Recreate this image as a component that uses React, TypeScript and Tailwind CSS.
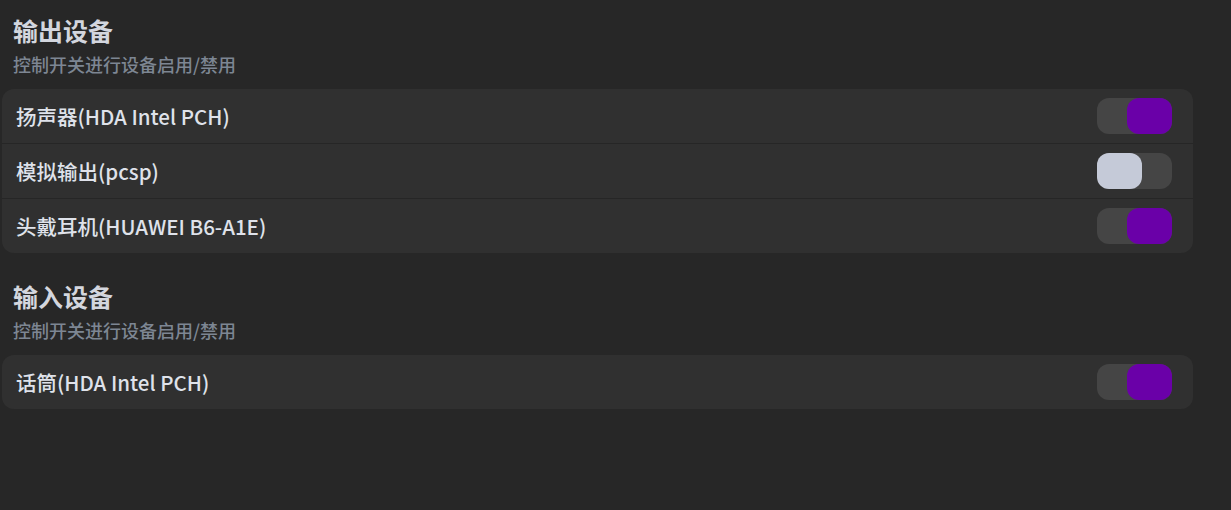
const font = { fontFamily: '"Noto Sans CJK SC", "Noto Sans", sans-serif' };

type Device = { name: string; on: boolean };

const outputs: Device[] = [
  { name: "扬声器(HDA Intel PCH)", on: true },
  { name: "模拟输出(pcsp)", on: false },
  { name: "头戴耳机(HUAWEI B6-A1E)", on: true },
];

const inputs: Device[] = [{ name: "话筒(HDA Intel PCH)", on: true }];

function Toggle({ on }: { on: boolean }) {
  return (
    <div
      className={`flex w-[75px] h-[36px] rounded-[12px] bg-[#454545] ${
        on ? "justify-end" : "justify-start"
      }`}
    >
      <div
        className={`w-[45px] h-[36px] rounded-[12px] ${
          on ? "bg-[#6a00a8]" : "bg-[#c5cad8]"
        }`}
      />
    </div>
  );
}

function Section({ title, devices }: { title: string; devices: Device[] }) {
  return (
    <div className="pt-[13px] pb-[13px]">
      <div className="pl-[13px]">
        <h2 className="text-[25px] leading-[34px] font-bold text-[#d3d6de]">{title}</h2>
        <p className="mt-[4px] text-[18px] leading-[26px] font-medium text-[#7d8693]">
          控制开关进行设备启用/禁用
        </p>
      </div>
      <div className="mt-[12px] ml-[2px] w-[1191px] rounded-[12px] bg-[#303030] overflow-hidden">
        {devices.map((d, i) => (
          <div
            key={d.name}
            className={`flex items-center justify-between pl-[14px] pr-[21px] ${
              i > 0 ? "h-[55px] border-t border-[#262626]" : "h-[54px]"
            }`}
          >
            <span className="text-[20.5px] font-medium text-[#dfe2ea]">{d.name}</span>
            <Toggle on={d.on} />
          </div>
        ))}
      </div>
    </div>
  );
}

export default function App() {
  return (
    <div className="w-[1231px] h-[510px] bg-[#272727] overflow-hidden" style={font}>
      <Section title="输出设备" devices={outputs} />
      <Section title="输入设备" devices={inputs} />
    </div>
  );
}
